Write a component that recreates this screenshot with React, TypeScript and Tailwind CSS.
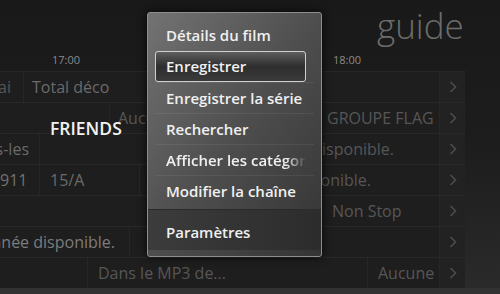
import React from "react";

const Chevron = () => (
  <svg width="8" height="12" viewBox="0 0 8 12" fill="none">
    <polyline points="1.5,1 6.5,6 1.5,11" stroke="#4c4c4c" strokeWidth="1.6" />
  </svg>
);

const cell = "h-full flex items-center border-r border-[#262626] overflow-hidden whitespace-nowrap";

function Row({ children }: { children: React.ReactNode }) {
  return (
    <div className="h-[31px] flex w-[465px] border-t border-[#282828] bg-[#1e1e1e]">
      {children}
      <div className="h-full w-[25px] flex items-center justify-center bg-[#222222]">
        <Chevron />
      </div>
    </div>
  );
}

const items = [
  "Détails du film",
  "Enregistrer",
  "Enregistrer la série",
  "Rechercher",
  "Afficher les catégories",
  "Modifier la chaîne",
];

export default function App() {
  return (
    <div className="relative w-[500px] h-[294px] overflow-hidden bg-gradient-to-b from-[#191919] via-[#1d1d1d] to-[#2b2b2b] font-['Open_Sans',sans-serif] text-[16px] text-[#565656]">
      <div className="h-[71px] flex flex-col">
        <div className="h-[52px] pl-[377px] pt-[8px] text-[35px] leading-[36px] font-light text-[#6c6c6c]">guide</div>
        <div className="h-[16px] flex items-center text-[11px] text-[#8a8a8a]">
          <span className="ml-[52px] w-[281px]">17:00</span>
          <span>18:00</span>
        </div>
      </div>
      <div className="flex flex-col">
        <Row>
          <div className={`${cell} w-[24px] justify-end pr-[12px]`}>Délai</div>
          <div className={`${cell} w-[416px] pl-[8px] text-[#6a6a6a]`}>Total déco</div>
        </Row>
        <Row>
          <div className={`${cell} w-[110px]`}></div>
          <div className={`${cell} w-[208px] pl-[8px]`}>Aucune donnée disponible.</div>
          <div className={`${cell} w-[122px] pl-[9px]`}>GROUPE FLAG</div>
        </Row>
        <Row>
          <div className={`${cell} w-[40px] justify-end pr-[10px] text-[#6a6a6a]`}>Tous-les</div>
          <div className={`${cell} w-[272px]`}></div>
          <div className={`${cell} w-[128px] justify-end pr-[45px]`}>Aucune donnée disponible.</div>
        </Row>
        <Row>
          <div className={`${cell} w-[40px] text-[#727272]`}>911</div>
          <div className={`${cell} w-[100px] pl-[10px] text-[#6a6a6a]`}>15/A</div>
          <div className={`${cell} w-[300px] justify-end pr-[68px]`}>Aucune donnée disponible.</div>
        </Row>
        <Row>
          <div className={`${cell} w-[322px]`}></div>
          <div className={`${cell} w-[118px] pl-[10px]`}>Non Stop</div>
        </Row>
        <Row>
          <div className={`${cell} w-[130px] justify-end pr-[14px] text-[#7c7c7c]`}>Aucune donnée disponible.</div>
          <div className={`${cell} w-[310px]`}></div>
        </Row>
        <Row>
          <div className={`${cell} w-[88px]`}></div>
          <div className={`${cell} w-[280px] pl-[10px]`}>Dans le MP3 de...</div>
          <div className={`${cell} w-[72px] pl-[10px]`}>Aucune</div>
        </Row>
        <div className="h-[8px] bg-[#323232]"></div>
      </div>

      <div className="absolute left-[50px] top-[115px] text-[17.5px] font-semibold text-[#f2f2f2]">FRIENDS</div>

      <div className="absolute left-[147px] top-[12px] w-[175px] h-[245px] rounded-[3px] border-[1.5px] border-[#8e8e8e] bg-gradient-to-br from-[#737373] via-[#4e4e4e] to-[#343434] shadow-[0_0_10px_rgba(0,0,0,0.8)] flex flex-col text-[15px] font-semibold text-[#f0f0f0]">
        <div className="pt-[7px] px-[7px] flex flex-col">
          {items.map((t, i) => (
            <div
              key={t}
              className={
                i === 1
                  ? "h-[31px] w-[151px] flex items-center pl-[10px] rounded-[3px] border-[1.5px] border-[#cfcfcf] bg-gradient-to-b from-[#5e5e5e] via-[#2e2e2e] to-[#3a3a3a] whitespace-nowrap overflow-hidden"
                  : `h-[31px] flex items-center pl-[11px] whitespace-nowrap overflow-hidden ${i > 1 ? "border-t border-[#ffffff12]" : ""}`
              }
            >
              {i === 4 ? (
                <span className="w-[140px] overflow-hidden [mask-image:linear-gradient(to_right,black_85%,transparent)]">{t}</span>
              ) : (
                t
              )}
            </div>
          ))}
        </div>
        <div className="mt-[3px] h-[41px] flex items-center pl-[18px] pt-[5px] bg-gradient-to-r from-[#3c3c3c] to-[#2c2c2c] border-t border-[#2a2a2a]">
          Paramètres
        </div>
      </div>
    </div>
  );
}
